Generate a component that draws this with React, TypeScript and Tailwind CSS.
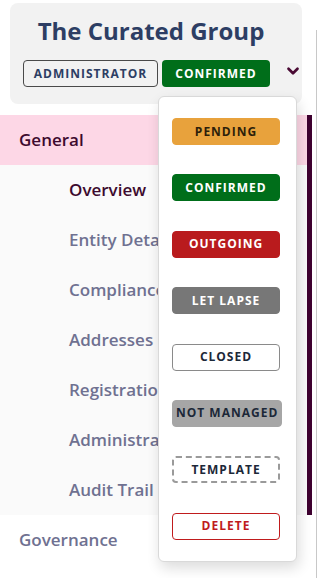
import { ChevronDown } from 'lucide-react';

const children = [
  'Overview',
  'Entity Details',
  'Compliance',
  'Addresses',
  'Registrations',
  'Administration',
  'Audit Trail',
];

const statuses = [
  { label: 'PENDING', cls: 'bg-[#e8a23c] text-[#2e1f0a] border-[#e8a23c]' },
  { label: 'CONFIRMED', cls: 'bg-[#006e1a] text-white border-[#006e1a]' },
  { label: 'OUTGOING', cls: 'bg-[#b91b1d] text-white border-[#b91b1d]' },
  { label: 'LET LAPSE', cls: 'bg-[#777777] text-white border-[#777777]' },
  { label: 'CLOSED', cls: 'bg-white text-[#1c2838] border-[#8a8a8a]' },
  { label: 'NOT MANAGED', cls: 'bg-[#a6a6a6] text-[#1c2838] border-[#a6a6a6]' },
  { label: 'TEMPLATE', cls: 'bg-white text-[#1c2838] border-[#9a9a9a] border-2 border-dashed' },
  { label: 'DELETE', cls: 'bg-white text-[#c01b1d] border-[#c01b1d]' },
];

function StatusMenu() {
  return (
    <div className="absolute left-[158px] top-[96px] w-[139px] h-[466px] rounded-[6px] border border-[#d9d9d9] bg-white shadow-[2px_6px_14px_rgba(0,0,0,0.14)]">
      <div className="flex flex-col items-start gap-[29.4px] pl-[13px] pt-[21px]">
        {statuses.map((s) => (
          <div
            key={s.label}
            className={`flex h-[27px] min-w-[108px] items-center justify-center whitespace-nowrap rounded-[4px] border px-[3px] text-[12px] font-bold tracking-[1px] ${s.cls}`}
          >
            {s.label}
          </div>
        ))}
      </div>
    </div>
  );
}

export default function App() {
  return (
    <div className="relative h-[578px] w-[319px] overflow-hidden bg-white font-['Open_Sans',sans-serif]">
      <div className="flex">
        <aside className="w-[312px]">
          <div className="pl-[10px] pt-[3px]">
            <div className="h-[101px] w-[292px] rounded-[8px] bg-[#f2f2f2]">
              <div className="flex flex-col items-center pr-[10px] pt-[12px]">
                <h1 className="text-[24px] font-bold leading-[32px] text-[#2d3e64]">The Curated Group</h1>
              </div>
              <div className="mt-[13px] flex items-center pl-[13px]">
                <span className="flex h-[27px] w-[135px] items-center justify-center rounded-[4px] border border-[#4a4a4a] text-[12px] font-bold tracking-[1px] text-[#2d3e64]">
                  ADMINISTRATOR
                </span>
                <span className="ml-[4px] flex h-[27px] w-[108px] items-center justify-center rounded-[4px] bg-[#006e1a] text-[12px] font-bold tracking-[1px] text-white">
                  CONFIRMED
                </span>
                <ChevronDown className="mb-[5px] ml-auto h-[18px] w-[18px] text-[#4a0a34]" strokeWidth={3.6} />
              </div>
            </div>
          </div>

          <nav className="mt-[11px]">
            <div className="border-r-[5px] border-[#3e0030]">
              <div className="flex h-[50px] items-center bg-[#fdd7e6] pl-[19px] text-[17px] font-semibold text-[#3d0a2e]">
                General
              </div>
              <div className="bg-[#fafafa]">
                {children.map((c, i) => (
                  <div
                    key={c}
                    className={`flex h-[50px] items-center whitespace-nowrap pl-[69px] text-[17px] font-semibold ${
                      i === 0 ? 'text-[#3d0a2e]' : 'text-[#6f7191]'
                    }`}
                  >
                    {c}
                  </div>
                ))}
              </div>
            </div>
            <div className="flex h-[50px] items-center pl-[19px] text-[17px] font-semibold text-[#6f7191]">
              Governance
            </div>
          </nav>
        </aside>
        <main className="ml-[4px] mt-[30px] h-[548px] border-l border-[#c8c8c8]" />
      </div>
      <StatusMenu />
    </div>
  );
}
